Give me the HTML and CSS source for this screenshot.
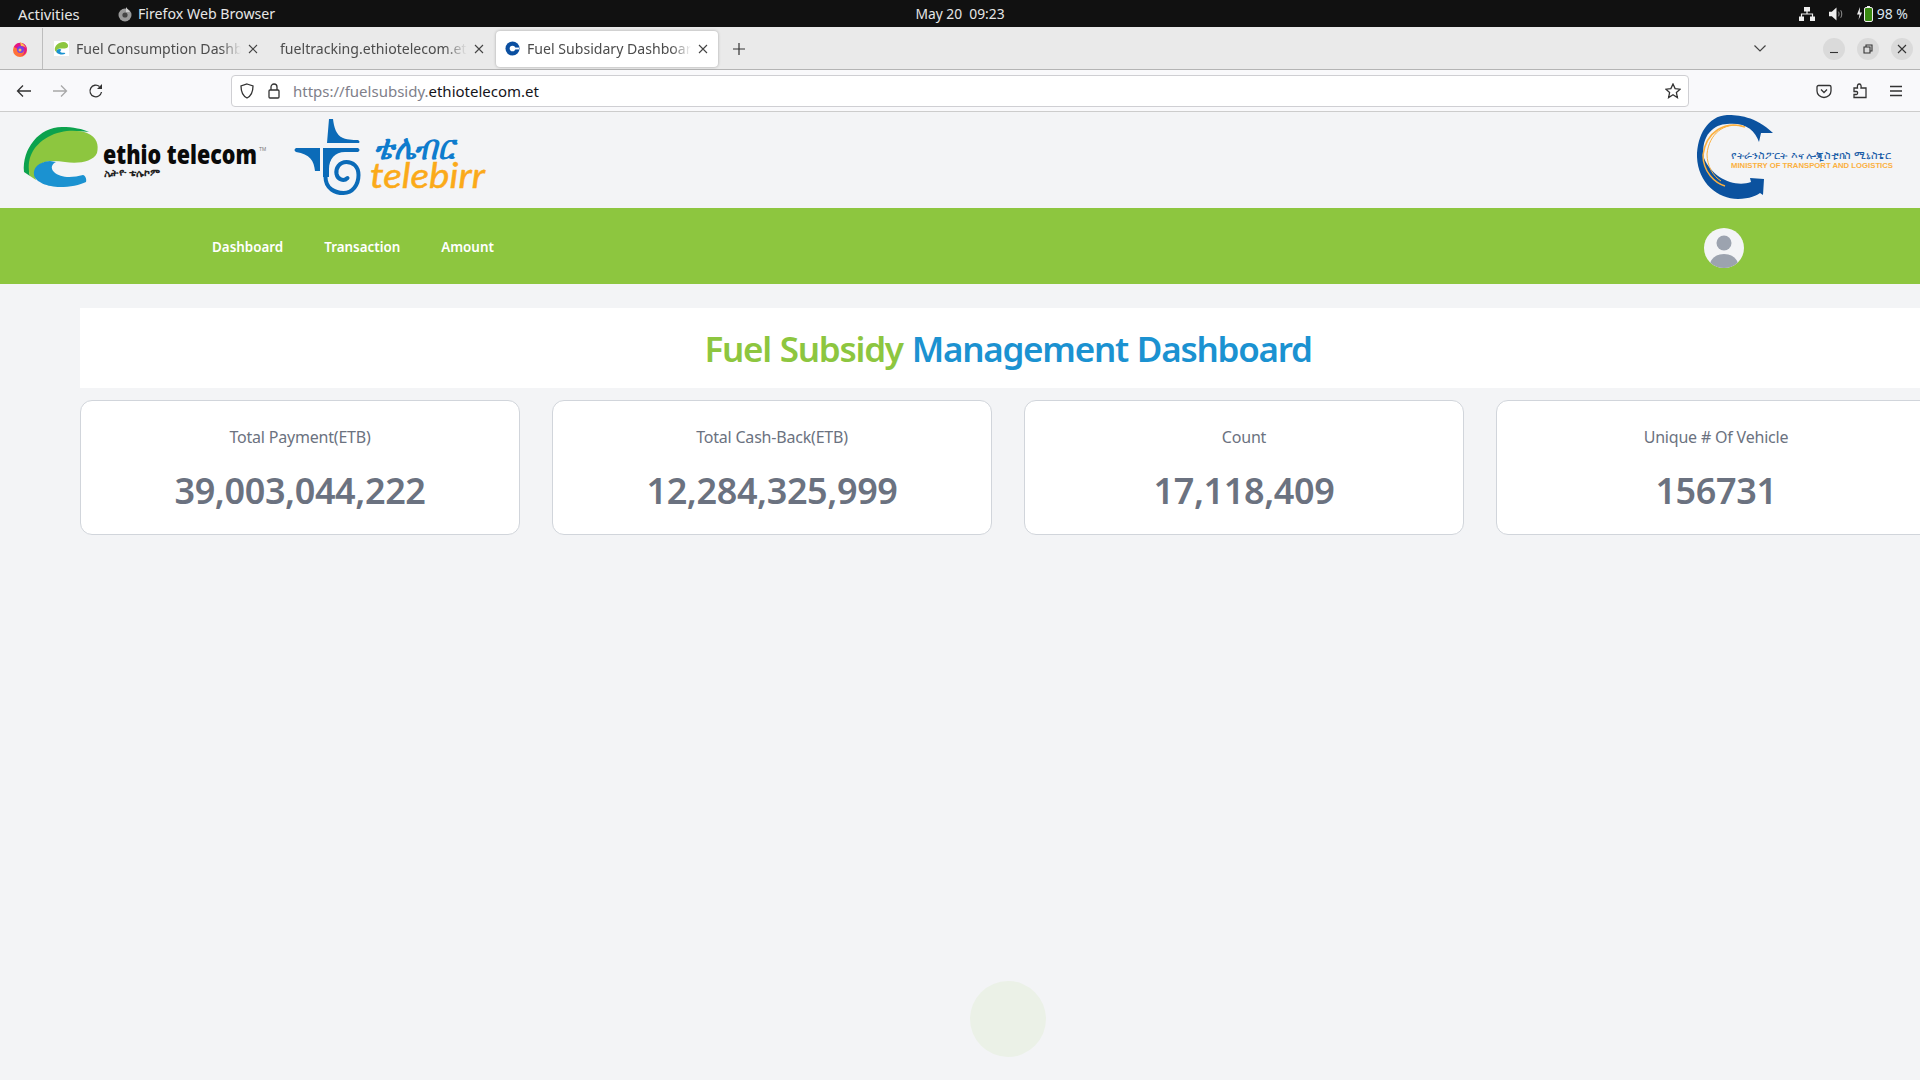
FILE: index.html
```html
<!DOCTYPE html>
<html lang="en">
<head>
<meta charset="utf-8">
<title>Fuel Subsidary Dashboard</title>
<link rel="stylesheet" href="styles.css">
</head>
<body>
<div class="os-bar">
  <div class="os-left">
    <span class="os-activities">Activities</span>
    <span class="os-app">
      <svg class="os-ff" viewBox="0 0 16 16"><circle cx="8" cy="9" r="6.5" fill="#9a9a9a"/><circle cx="8" cy="9" r="2.6" fill="#444"/><path d="M9 1c1 2 3 3 4 5l-4 0z" fill="#ccc"/></svg>
      Firefox Web Browser
    </span>
  </div>
  <div class="os-clock">May 20&nbsp;&nbsp;09:23</div>
  <div class="os-right">
    <svg class="os-net" viewBox="0 0 16 14"><rect x="5" y="0" width="6" height="4.5" fill="#eee"/><rect x="0" y="9.5" width="5" height="4.5" fill="#eee"/><rect x="11" y="9.5" width="5" height="4.5" fill="#eee"/><path d="M8 4v3M2.5 10V7h11v3" stroke="#eee" stroke-width="1.2" fill="none"/></svg>
    <svg class="os-vol" viewBox="0 0 16 14"><path d="M0 4.5h3L8 0v14L3 9.500H0z" fill="#eee"/><path d="M10 4.500c1 1.500 1 3.500 0 5M12.500 3c1.500 2.500 1.500 5.500 0 8" stroke="#999" stroke-width="1" fill="none"/></svg>
    <span class="os-batt">
      <svg class="os-batt-ico" viewBox="0 0 16 16"><path d="M3 1L0 8.500h2.500L1.500 14 5 6.500H2.800z" fill="#eee"/><rect x="7.500" y="1.500" width="8" height="14" rx="1.500" fill="#3a8a12" stroke="#eee"/><rect x="10" y="0" width="3" height="1.500" fill="#eee"/></svg>
      98 %
    </span>
  </div>
</div>

<div class="tab-bar">
  <div class="ff-slot">
    <svg class="ff-logo" viewBox="0 0 16 16"><circle cx="8" cy="9" r="7" fill="#ff7139"/><path d="M2 6c2-5 9-6 12-1 2 4 0 9-5 10 4-2 4-6 2-8-2-1-5-1-5 1z" fill="#e31587"/><circle cx="8.500" cy="8.500" r="3.500" fill="#7542e5"/><path d="M8 1c2 1 5 3 6 6-2-2-4-2-5-2z" fill="#ffbd4f"/><circle cx="8" cy="9" r="1.500" fill="#ffbd4f"/></svg>
  </div>
  <div class="tab">
    <svg class="fav" viewBox="0 0 16 16"><rect width="16" height="16" fill="#fff"/><path d="M1 10C0 5 5 1 10 1c3 0 5 2 5 4 0 3-4 3-7 3-2 0-4 0-5 2 0 1 0 2 1 3-1-1-2-2-3-3z" fill="#8dc63f"/><path d="M6 8.500c-3 0-4 2-3 4 2 2 7 2.500 9 1 0-1-1-1-3-1-2 0-3-1-2-2 1-1 1-2-1-2z" fill="#1b92d1"/></svg>
    <span class="tab-title">Fuel Consumption Dashboard</span>
    <svg class="tab-x" viewBox="0 0 10 10"><path d="M1 1l8 8M9 1l-8 8"/></svg>
  </div>
  <div class="tab">
    <span class="tab-title">fueltracking.ethiotelecom.et/</span>
    <svg class="tab-x" viewBox="0 0 10 10"><path d="M1 1l8 8M9 1l-8 8"/></svg>
  </div>
  <div class="tab tab-active">
    <svg class="fav" viewBox="0 0 16 16"><circle cx="8" cy="8" r="7.500" fill="#0b4fa0"/><circle cx="8" cy="8" r="3" fill="#fff"/><rect x="8" y="7" width="7" height="2" fill="#fff"/></svg>
    <span class="tab-title">Fuel Subsidary Dashboard</span>
    <svg class="tab-x" viewBox="0 0 10 10"><path d="M1 1l8 8M9 1l-8 8"/></svg>
  </div>
  <svg class="tab-plus" viewBox="0 0 12 12"><path d="M6 0v12M0 6h12"/></svg>
  <div class="tab-end">
    <svg class="chev" viewBox="0 0 12 7"><path d="M.5.500l5.500 5.500L11.500.500"/></svg>
    <div class="win-btns">
      <div class="win-btn"><svg viewBox="0 0 10 10"><path d="M1 8.500h8"/></svg></div>
      <div class="win-btn"><svg viewBox="0 0 10 10"><path d="M1 3h6v6H1zM3 3V1h6v6H7"/></svg></div>
      <div class="win-btn"><svg viewBox="0 0 10 10"><path d="M1 1l8 8M9 1l-8 8"/></svg></div>
    </div>
  </div>
</div>

<div class="url-row">
  <svg class="nav-ico" viewBox="0 0 16 16"><path d="M15 8H1.500M7 2.500L1.500 8 7 13.500"/></svg>
  <svg class="nav-ico nav-off" viewBox="0 0 16 16"><path d="M1 8h13.500M9 2.500L14.500 8 9 13.500"/></svg>
  <svg class="nav-ico" viewBox="0 0 16 16"><path d="M13.500 9a5.800 5.800 0 1 1-2-5.500"/><path class="ico-fill" d="M14 1v5H9z"/></svg>
  <div class="url-box">
    <svg class="url-ico" viewBox="0 0 16 16"><path d="M8 1l6 2c0 6-2 10-6 12C4 13 2 9 2 3z"/></svg>
    <svg class="url-ico" viewBox="0 0 16 16"><rect x="3" y="7" width="10" height="8" rx="1"/><path d="M5 7V4a3 3 0 0 1 6 0v3"/></svg>
    <span class="url-text"><span class="url-dim">https://fuelsubsidy.</span>ethiotelecom.et</span>
    <svg class="url-star" viewBox="0 0 16 16"><path d="M8 1l2.100 4.600 5 .6-3.700 3.400 1 5L8 11.700 3.600 14.600l1-5L.900 6.200l5-.6z"/></svg>
  </div>
  <div class="url-tools">
    <svg class="nav-ico" viewBox="0 0 16 16"><path d="M2.500 2.500h11a1.500 1.500 0 0 1 1.500 1.500v4a7 6.500 0 0 1-14 0V4a1.500 1.500 0 0 1 1.500-1.500z"/><path d="M5 6.500l3 3 3-3"/></svg>
    <svg class="nav-ico" viewBox="0 0 16 16"><path d="M2 5h3.500C5 2 6 1 7.300 1S9.500 2.500 9 5h5v9.500H2v-3h2.500c1.500 0 1.500-3 0-3H2z"/></svg>
    <svg class="nav-ico" viewBox="0 0 16 16"><path d="M2 3.500h12M2 8h12M2 12.500h12"/></svg>
  </div>
</div>

<header class="brand">
  <svg class="brand-left" viewBox="0 112 500 96">
    <path d="M24 172C22 149 39 127 62 127c11 0 21 2 27 5-18-3-45 2-56 21-4 8-5 16-3 23z" fill="#0ca24d"/>
    <path d="M30 176c-4-16 2-30 18-39 14-8 31-7 39-4 10 4 12 12 10 20-4 9-19 11-32 9-13-2-25-2-29 8-1 4-1 8 0 10z" fill="#8dc63f"/>
    <path d="M50 161c-12 1-17 7-16 14 1 7 14 12 26 12 10 0 20-2 26-5 1-3-1-7-3-7-11 3-23 3-29-3-4-4-2-8 2-10z" fill="#1b92d1"/>
    <text class="et-name" x="103" y="164" textLength="154" lengthAdjust="spacingAndGlyphs">ethio telecom</text>
    <text class="et-tm" x="259" y="151">TM</text>
    <text class="et-am" x="104" y="176" textLength="56" lengthAdjust="spacingAndGlyphs">ኢትዮ ቴሌኮም</text>
    <path d="M329 119h4c1 8 3 16 10 19 5 2 13 2 15 2 2 1 2 3 0 3h-31z" fill="#0b6bb8"/>
    <path d="M296 148h24v23h-5c-1-10-5-17-19-19-2-1-2-3 0-4z" fill="#0b6bb8"/>
    <path d="M323 148h35c2 1 2 3 0 4h-13c-10 0-16 7-16 17v8h-6z" fill="#0b6bb8"/>
    <path d="M325.500 169v8c0 12 10 16 18 16 9 0 15-8 15-18 0-9-6-13-12-13-7 0-11 6-10 12 1 5 7 8 11 4" fill="none" stroke="#0b6bb8" stroke-width="4" stroke-linecap="round"/>
    <text class="tb-am" x="374" y="159" textLength="80" lengthAdjust="spacingAndGlyphs">ቴሌብር</text>
    <text class="tb-en" x="370" y="188" textLength="115" lengthAdjust="spacingAndGlyphs">telebirr</text>
  </svg>
  <svg class="brand-right" viewBox="1680 112 240 96">
    <path d="M1773 133c-18-17-35-18-46-18-19 1-30 20-30 42 1 26 21 42 41 42 11 0 20-4 22-6l3 2 1-16-14-1 1 4c-16 6-39-4-47-24-4-23 11-34 23-34 18-2 28 6 32 18l2-9z" fill="#0b529f"/>
    <path d="M1745 127c-20-7-39 5-42 28 0 17 12 28 22 31" fill="none" stroke="#fbb040" stroke-width="1.500"/>
    <path d="M1742 126c-18-4-33 8-35 28 0 12 6 22 14 27" fill="none" stroke="#fbb040" stroke-width="1"/>
    <text class="mot-am" x="1731" y="159" textLength="161" lengthAdjust="spacingAndGlyphs">የትራንስፖርት እና ሎጂስቲክስ ሚኒስቴር</text>
    <text class="mot-en" x="1731" y="168" textLength="162" lengthAdjust="spacingAndGlyphs">MINISTRY OF TRANSPORT AND LOGISTICS</text>
  </svg>
</header>

<nav class="green-nav">
  <a class="nav-link">Dashboard</a>
  <a class="nav-link">Transaction</a>
  <a class="nav-link">Amount</a>
  <svg class="avatar" viewBox="0 0 40 40"><defs><clipPath id="av"><circle cx="20" cy="20" r="20"/></clipPath></defs><circle cx="20" cy="20" r="20" fill="#f3f4f6"/><g clip-path="url(#av)" fill="#9ca3af"><circle cx="20" cy="15" r="7.500"/><ellipse cx="20" cy="37" rx="14" ry="11"/></g></svg>
</nav>

<main class="content">
  <div class="title-bar"><h1 class="title"><span class="t-green">Fuel Subsidy</span> <span class="t-blue">Management Dashboard</span></h1></div>
  <div class="cards">
    <div class="card"><div class="card-label">Total Payment(ETB)</div><div class="card-value">39,003,044,222</div></div>
    <div class="card"><div class="card-label">Total Cash-Back(ETB)</div><div class="card-value">12,284,325,999</div></div>
    <div class="card"><div class="card-label">Count</div><div class="card-value">17,118,409</div></div>
    <div class="card"><div class="card-label">Unique # Of Vehicle</div><div class="card-value">156731</div></div>
  </div>
</main>
<div class="blob"></div>
</body>
</html>
```
FILE: styles.css
```css
* { box-sizing: border-box; }
html, body { margin: 0; height: 100%; }
body {
  position: relative;
  width: 1920px;
  height: 1080px;
  overflow: hidden;
  background: #f3f4f6;
  font-family: "Noto Sans", "Open Sans", sans-serif;
}

/* OS bar */
.os-bar {
  height: 27px;
  background: #111;
  color: #e6e6e6;
  display: grid;
  grid-template-columns: 1fr auto 1fr;
  align-items: center;
  font-size: 14.500px;
}
.os-left { display: flex; align-items: center; padding-left: 18px; }
.os-activities { width: 99px; font-size: 14.800px; }
.os-app { display: flex; align-items: center; gap: 5px; font-size: 14.200px; }
.os-ff { width: 16px; height: 16px; }
.os-clock { font-size: 13.800px; }
.os-right { display: flex; align-items: center; justify-content: flex-end; padding-right: 12px; }
.os-net { width: 16px; height: 14px; margin-right: 14px; }
.os-vol { width: 15px; height: 14px; margin-right: 13px; }
.os-batt { display: flex; align-items: center; gap: 4px; color: #dce6f0; font-size: 14px; }
.os-batt-ico { width: 16px; height: 16px; }

/* Tabs */
.tab-bar {
  height: 43px;
  background: #eaeaea;
  border-bottom: 1px solid #b4b4b4;
  display: flex;
  align-items: center;
  padding-top: 1px;
}
.ff-slot {
  width: 43px;
  height: 41px;
  border-right: 1px solid #bdbdbd;
  padding-right: 2px;
  display: flex;
  align-items: center;
  justify-content: center;
}
.ff-logo { width: 16px; height: 16px; }
.tab {
  width: 226px;
  height: 36px;
  padding: 0 11px;
  display: flex;
  align-items: center;
  gap: 7px;
  font-size: 14.100px;
  color: #4c4c4c;
}
.tab-active {
  width: 222px;
  margin-left: 1px;
  padding: 0 10px 0 9px;
  background: #fff;
  border-radius: 4px;
  box-shadow: 0 0 3px rgba(0,0,0,.3);
}
.fav { width: 15px; height: 15px; flex: none; }
.tab-title {
  flex: 1;
  min-width: 0;
  white-space: nowrap;
  overflow: hidden;
  -webkit-mask-image: linear-gradient(90deg, #000 88%, transparent);
  mask-image: linear-gradient(90deg, #000 88%, transparent);
}
.tab-x { width: 10px; height: 10px; flex: none; fill: none; stroke: #444; stroke-width: 1.100; }
.tab-plus { width: 12px; height: 12px; margin-left: 15px; fill: none; stroke: #333; stroke-width: 1.200; }
.tab-end { margin-left: auto; display: flex; align-items: center; padding-right: 7px; }
.chev { width: 12px; height: 7px; fill: none; stroke: #444; stroke-width: 1.200; margin-right: 57px; }
.win-btns { display: flex; gap: 12px; }
.win-btn {
  width: 22px;
  height: 22px;
  border-radius: 50%;
  background: #dadada;
  display: flex;
  align-items: center;
  justify-content: center;
}
.win-btn svg { width: 10px; height: 10px; fill: none; stroke: #333; stroke-width: 1.100; }

/* URL row */
.url-row {
  height: 42px;
  background: #f9f9fb;
  border-bottom: 1px solid #ccc;
  display: flex;
  align-items: center;
  padding-left: 16px;
  gap: 20px;
}
.nav-ico { width: 16px; height: 16px; flex: none; fill: none; stroke: #333; stroke-width: 1.300; }
.nav-off { stroke: #a8a8a8; }
.ico-fill { fill: #333; stroke: none; }
.url-box {
  width: 1458px;
  height: 32px;
  margin-left: 107px;
  background: #fff;
  border: 1px solid #cfcfd3;
  border-radius: 4px;
  display: flex;
  align-items: center;
  padding: 0 7px 0 7px;
  gap: 11px;
}
.url-ico { width: 16px; height: 16px; flex: none; fill: none; stroke: #333; stroke-width: 1.300; }
.url-text { font-size: 15px; color: #15141a; }
.url-dim { color: #80808a; }
.url-star { width: 16px; height: 16px; margin-left: auto; fill: none; stroke: #333; stroke-width: 1.300; }
.url-tools { display: flex; gap: 20px; margin-left: 107px; }

/* Brand */
.brand {
  height: 96px;
  display: flex;
  justify-content: space-between;
  background: #f3f4f6;
}
.brand-left { width: 500px; height: 96px; }
.brand-right { width: 240px; height: 96px; }
.et-name { font-family: "Open Sans", sans-serif; font-weight: 800; font-size: 26px; fill: #0a0a0a; }
.et-tm { font-family: "Liberation Sans", sans-serif; font-size: 5px; fill: #777; }
.et-am { font-family: "Noto Sans", "DejaVu Sans", sans-serif; font-size: 9px; fill: #222; font-weight: 700; }
.tb-am { font-family: "Noto Sans", "DejaVu Sans", sans-serif; font-size: 34px; font-weight: 700; font-style: italic; fill: #0e7ccd; }
.tb-en { font-family: "Lato", sans-serif; font-size: 35px; font-style: italic; font-weight: 400; fill: #fbaa19; stroke: #fbaa19; stroke-width: .5px; }
.mot-am { font-family: "Noto Sans", "DejaVu Sans", sans-serif; font-size: 9.500px; fill: #1c5ea8; }
.mot-en { font-family: "Liberation Sans", sans-serif; font-size: 7px; font-weight: 700; fill: #fbb040; }

/* Green nav */
.green-nav {
  height: 76px;
  background: #8dc63f;
  display: flex;
  align-items: center;
  padding: 0 176px 0 212px;
  gap: 41px;
}
.nav-link { color: #fff; font-size: 13.400px; font-weight: 600; position: relative; top: 1px; }
.avatar { width: 40px; height: 40px; margin-left: auto; position: relative; top: 2px; }

/* Content */
.content { padding: 24px 0 0 80px; width: 2000px; }
.title-bar {
  height: 80px;
  background: #fff;
  width: 1856px;
  display: flex;
  align-items: center;
  justify-content: center;
}
.title { margin: 0; font-size: 35px; font-weight: 600; letter-spacing: -1.250px; word-spacing: 1px; white-space: nowrap; }
.t-green { color: #8dc63f; }
.t-blue { color: #1b92d1; }
.cards { display: flex; gap: 32px; margin-top: 12px; }
.card {
  flex: none;
  width: 440px;
  height: 135px;
  background: #fff;
  border: 1px solid #d1d5db;
  border-radius: 12px;
  text-align: center;
  padding-top: 24px;
}
.card-label { font-size: 16px; color: #6b7280; line-height: 24px; letter-spacing: -0.200px; }
.card-value { font-size: 36px; font-weight: 600; color: #6b7280; line-height: 44px; margin-top: 20px; letter-spacing: -0.400px; }

.blob {
  position: absolute;
  left: 970px;
  top: 981px;
  width: 76px;
  height: 76px;
  border-radius: 50%;
  background: #ebf1e7;
}
```
